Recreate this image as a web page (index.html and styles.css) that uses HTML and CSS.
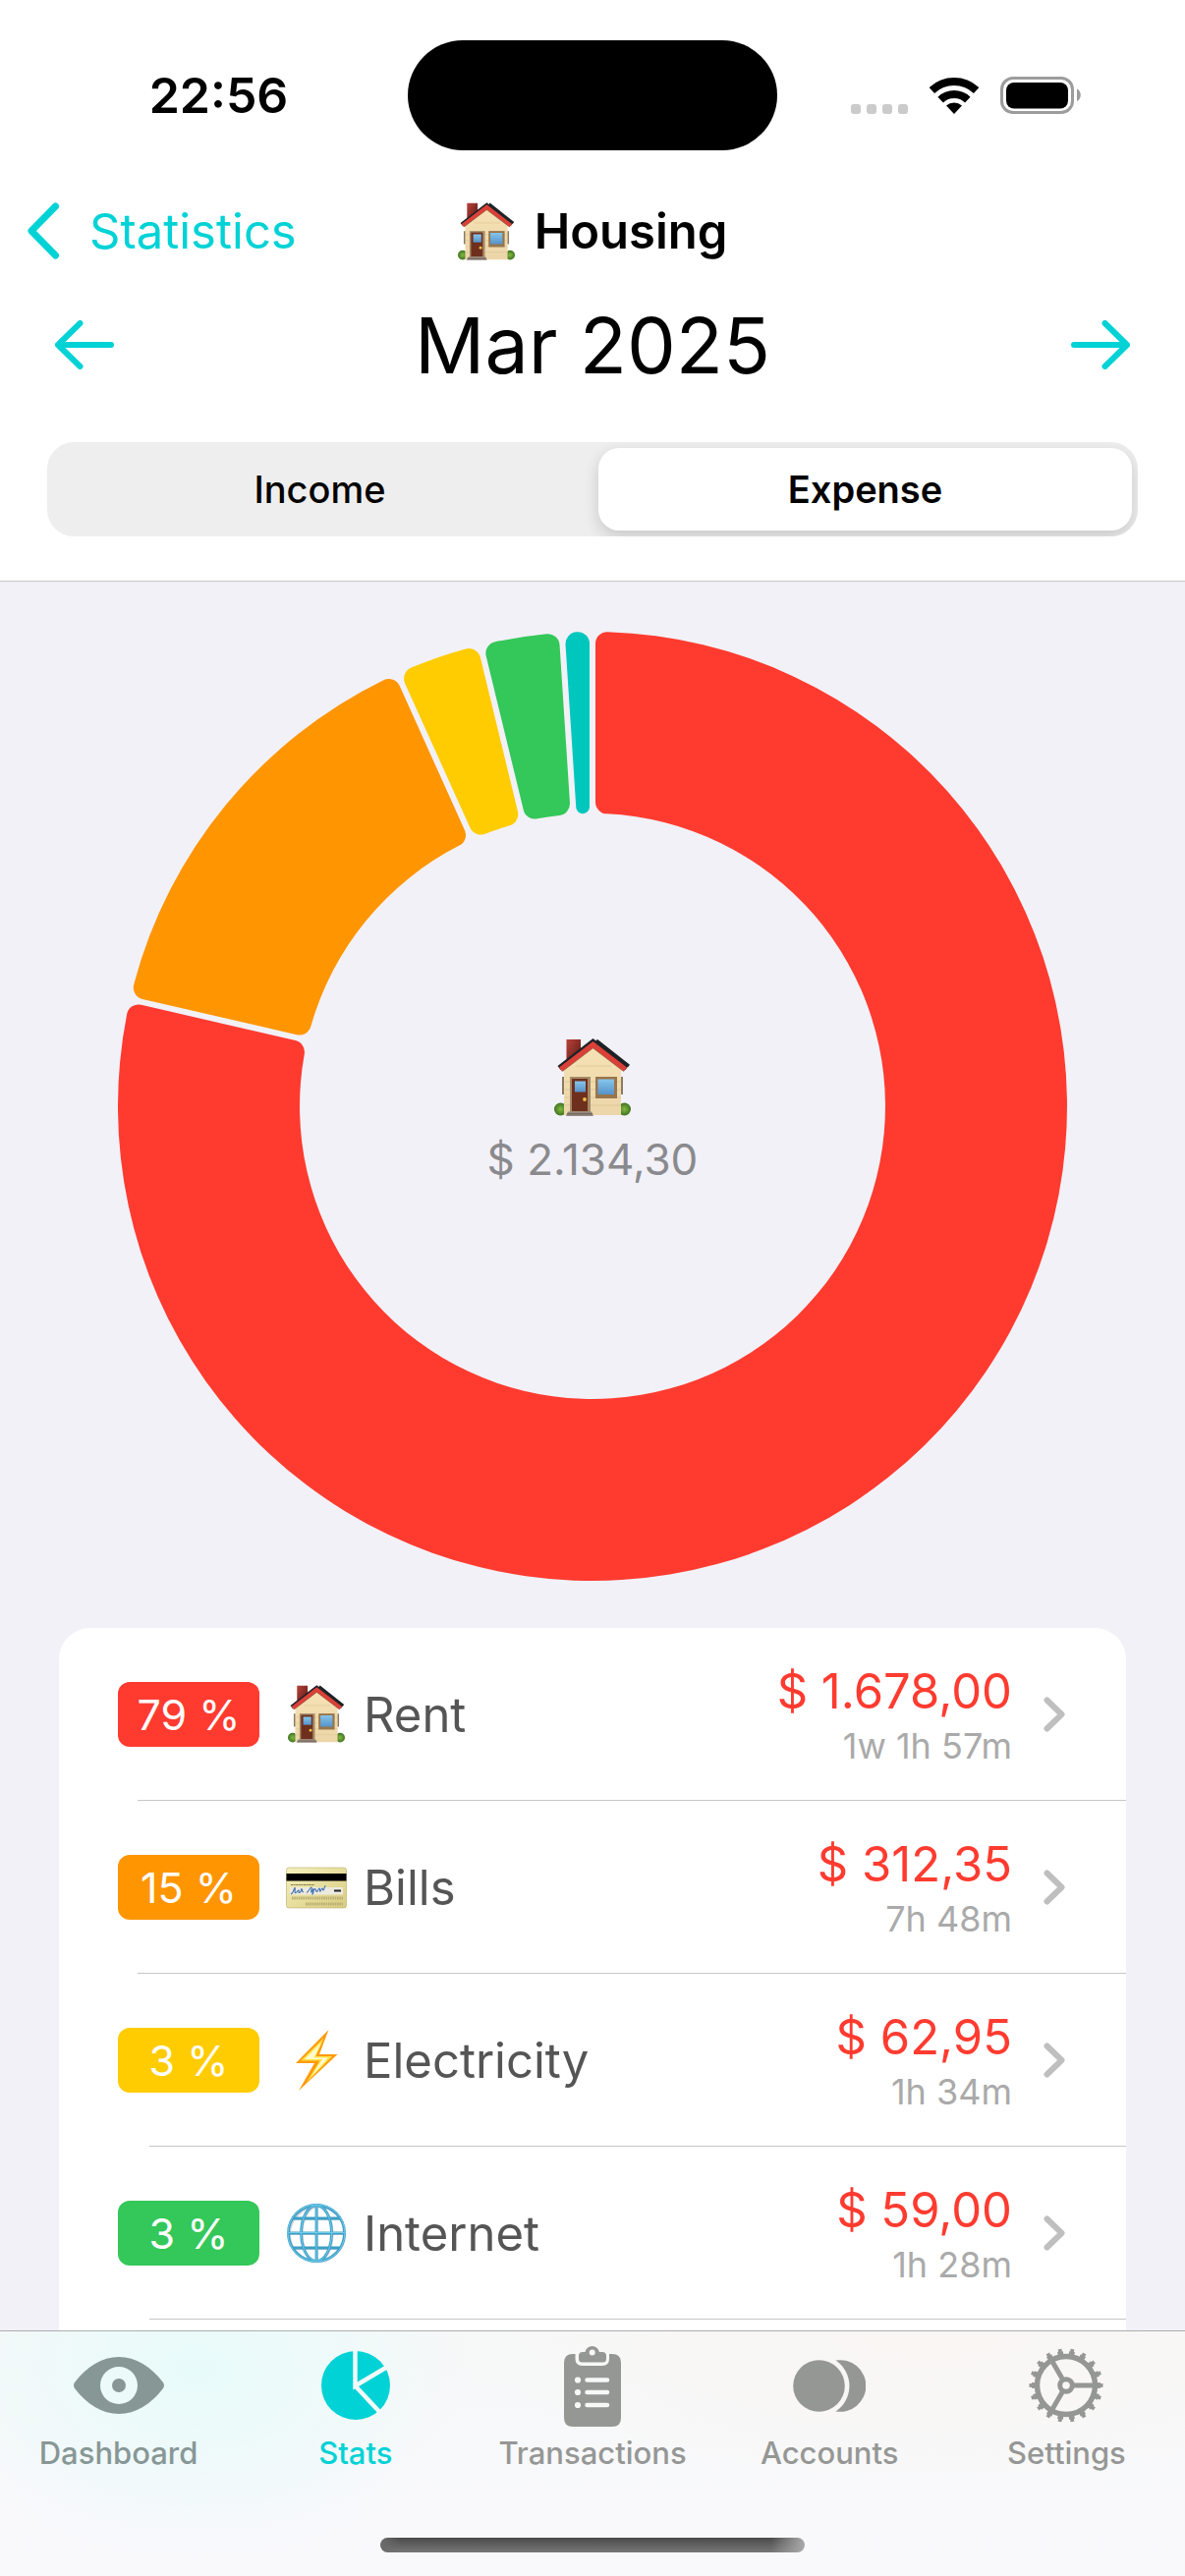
FILE: index.html
```html
<!DOCTYPE html>
<html lang="en">
<head>
<meta charset="utf-8">
<meta name="viewport" content="width=device-width, initial-scale=1">
<title>Housing</title>
<link rel="stylesheet" href="styles.css">
</head>
<body>
<svg class="sprite" width="0" height="0" aria-hidden="true">
  <defs>
    <linearGradient id="chimney" x1="0" y1="0" x2="1" y2="1"><stop offset="0" stop-color="#b8433a"/><stop offset="1" stop-color="#571611"/></linearGradient>
    <linearGradient id="wall" x1="0" y1="0" x2="0" y2="1"><stop offset="0" stop-color="#f6e2b4"/><stop offset="1" stop-color="#ecd6a9"/></linearGradient>
    <linearGradient id="glass" x1="0" y1="0" x2="0" y2="1"><stop offset="0" stop-color="#86c5ea"/><stop offset="1" stop-color="#5593cb"/></linearGradient>
    <radialGradient id="bush"><stop offset="0" stop-color="#83b93f"/><stop offset="1" stop-color="#3f7322"/></radialGradient>
    <linearGradient id="gold" x1="0" y1="0" x2="1" y2="1"><stop offset="0" stop-color="#f5f1bb"/><stop offset="1" stop-color="#d9cc80"/></linearGradient>
  </defs>
  <symbol id="house" viewBox="0 0 78 79">
    <circle cx="6.500" cy="72" r="6.500" fill="url(#bush)"/>
    <circle cx="71.500" cy="72" r="6.500" fill="url(#bush)"/>
    <path d="M8 39h3v18H8zM67 39h3v18h-3z" fill="#8d7a62"/>
    <path d="M12.500 1h14.500v16L12.500 27z" fill="url(#chimney)"/>
    <path d="M10 30L39.500 6 68 30v48H10z" fill="url(#wall)"/>
    <path d="M11 44h57M11 52h57M11 60h57M11 68h57M22 28h36" stroke="#dcc493" stroke-width=".8"/>
    <path d="M8 33L39.500 9 71 33" fill="none" stroke="#8e6a4a" stroke-width="2"/>
    <path d="M3.500 28L39.500 0 75.500 28l-3 4L39.500 5 6.500 32z" fill="#1d2225"/>
    <path d="M5 29.500L39.500 3 74 29.500l-3 4L39.500 9.500 8 33.500z" fill="#db4038"/>
    <path d="M43 1.800L76 28" stroke="#1d2225" stroke-width="3"/>
    <path d="M16 39h21v36H16z" fill="#a48a68"/>
    <path d="M18 41h16v33H18z" fill="#6f2f1d"/>
    <path d="M21 43.500h11v11H21z" fill="url(#glass)"/>
    <circle cx="31" cy="62" r="1.900" fill="#efc04b"/>
    <path d="M42 39h22v22H42z" fill="#98754c"/>
    <path d="M44.500 41.500H61V57H44.500z" fill="url(#glass)"/>
    <path d="M14 74.500h24l2 4.500H12z" fill="#95897f"/>
    <path d="M13 76.800h26" stroke="#655b53" stroke-width="1"/>
  </symbol>
  <symbol id="chevron" viewBox="0 0 22 36">
    <path d="M3.500 3.500L18.500 18l-15 14.500" fill="none" stroke="currentColor" stroke-width="6" stroke-linecap="round" stroke-linejoin="round"/>
  </symbol>
</svg>

<div class="app">
  <header class="top">
    <div class="status">
      <time class="clock">22:56</time>
      <div class="island"></div>
      <div class="status-icons">
        <svg width="58" height="10" viewBox="0 0 58 10" class="signal" aria-label="No signal">
          <g fill="#cbcbcb"><rect width="10" height="10" rx="3"/><rect x="16" width="10" height="10" rx="3"/><rect x="32" width="10" height="10" rx="3"/><rect x="48" width="10" height="10" rx="3"/></g>
        </svg>
        <svg width="50" height="38" viewBox="0 0 50 38" aria-label="Wi-Fi">
          <path d="M2.300 14A33 33 0 0 1 47.700 14M11.200 23.600a20 20 0 0 1 27.600 0" fill="none" stroke="#000" stroke-width="8"/>
          <path d="M25 38l-8-8.500a12 12 0 0 1 16 0z"/>
        </svg>
        <svg width="82" height="38" viewBox="0 0 82 38" aria-label="Battery full">
          <rect x="1.500" y="1.500" width="72" height="35" rx="11.500" fill="none" stroke="#9c9c9c" stroke-width="3"/>
          <rect x="6" y="6" width="63" height="26.500" rx="8"/>
          <path d="M78 12.500c5 2 5 10.500 0 12.500z" fill="#9c9c9c"/>
        </svg>
      </div>
    </div>

    <nav class="nav">
      <a class="back" href="#statistics">
        <svg width="34" height="58" viewBox="0 0 34 58" aria-hidden="true"><path d="M29.500 4L5 29l24.500 25" fill="none" stroke="currentColor" stroke-width="7" stroke-linecap="round" stroke-linejoin="round"/></svg>
        Statistics
      </a>
      <h1 class="title"><svg class="title-icon" aria-hidden="true"><use href="#house"/></svg>Housing</h1>
    </nav>

    <div class="month">
      <button class="step" type="button" aria-label="Previous month">
        <svg width="60" height="50" viewBox="0 0 60 50"><path d="M25.500 3L3 25l22.500 22M3 25h54" fill="none" stroke="currentColor" stroke-width="6" stroke-linecap="round" stroke-linejoin="round"/></svg>
      </button>
      <h2 class="month-name">Mar 2025</h2>
      <button class="step" type="button" aria-label="Next month">
        <svg width="60" height="50" viewBox="0 0 60 50"><path d="M34.500 3L57 25 34.500 47M57 25H3" fill="none" stroke="currentColor" stroke-width="6" stroke-linecap="round" stroke-linejoin="round"/></svg>
      </button>
    </div>

    <div class="segmented" role="radiogroup" aria-label="Type">
      <input class="segment-input" type="radio" name="type" id="income">
      <label class="segment" for="income">Income</label>
      <input class="segment-input" type="radio" name="type" id="expense" checked>
      <label class="segment" for="expense">Expense</label>
    </div>
  </header>

  <main class="content">
    <section class="donut" aria-label="Expenses by category">
      <svg class="donut-chart" id="chart" viewBox="-483 -483 966 966" role="img" aria-label="Donut chart"></svg>
      <div class="donut-label">
        <svg class="donut-icon" aria-hidden="true"><use href="#house"/></svg>
        <span>$ 2.134,30</span>
      </div>
    </section>

    <ul class="list">
      <li class="item">
        <a class="row" href="#rent">
          <span class="badge red">79 %</span>
          <svg class="row-icon" viewBox="0 0 62 62" aria-hidden="true"><use href="#house" x="2" y="1" width="58" height="59"/></svg>
          <span class="name">Rent</span>
          <span class="figures"><span class="amount">$ 1.678,00</span><span class="duration">1w 1h 57m</span></span>
          <svg class="chevron" aria-hidden="true"><use href="#chevron"/></svg>
        </a>
      </li>
      <li class="item">
        <a class="row" href="#bills">
          <span class="badge orange">15 %</span>
          <svg class="row-icon" viewBox="0 0 62 62" aria-hidden="true">
            <rect x=".5" y="11" width="61" height="41" rx="2.500" fill="url(#gold)" stroke="#b9ab6a" stroke-width=".6"/>
            <path d="M.5 17h61v7.500H.5z"/>
            <path d="M5 28.500h24" stroke="#7a7348" stroke-width="1" stroke-dasharray="2 .6"/>
            <path d="M4 31h54v7.500H4z" fill="#eceade"/>
            <path d="M5 38c3-1 3-6 4-6.500s-1 6 1 5 2-3 3-2.500-1 3 1 2.500 1-4 2-4 0 4 2 3m3 1c2-1 4-6 5-5.500s-1 5 0 5 1-4 2-3-1 6-1 5 2-7 3-5 1 3 2 2 1-3 2-3 0 4 1 3 1-3 2-3 0 2 1 2 2-6 2-4" fill="none" stroke="#4573b5" stroke-width="1.100"/>
            <path d="M49 34.500h7" stroke="#222" stroke-width="2"/>
            <path d="M6 42h52M20 48h38" stroke="#b9ad72" stroke-width="3" stroke-dasharray="1.500 .8"/>
          </svg>
          <span class="name">Bills</span>
          <span class="figures"><span class="amount">$ 312,35</span><span class="duration">7h 48m</span></span>
          <svg class="chevron" aria-hidden="true"><use href="#chevron"/></svg>
        </a>
      </li>
      <li class="item short-rule">
        <a class="row" href="#electricity">
          <span class="badge yellow">3 %</span>
          <svg class="row-icon" viewBox="0 0 62 62" aria-hidden="true">
            <path d="M43.500 0L10 34h19L13 62l39.500-37H34z" fill="#ff9b0c"/>
            <path d="M38.500 8.500L15 31.500h19.500L21 53.500 47 27H30.500z" fill="#ffe24a"/>
            <path d="M36 13L19 30h18L26 47.500 43 28.500H28.500z" fill="#fffbd0"/>
          </svg>
          <span class="name">Electricity</span>
          <span class="figures"><span class="amount">$ 62,95</span><span class="duration">1h 34m</span></span>
          <svg class="chevron" aria-hidden="true"><use href="#chevron"/></svg>
        </a>
      </li>
      <li class="item short-rule">
        <a class="row" href="#internet">
          <span class="badge green">3 %</span>
          <svg class="row-icon" viewBox="0 0 62 62" aria-hidden="true">
            <g fill="none" stroke="#c9cfdb" stroke-width="2" transform="translate(1 1)"><circle cx="31" cy="31" r="28"/><ellipse cx="31" cy="31" rx="15.500" ry="28"/><path d="M31 3v56M3 31h56M7 16h48M7 46h48"/></g>
            <g fill="none" stroke="#3d9fc6" stroke-width="2.800"><circle cx="31" cy="31" r="28.500"/><ellipse cx="31" cy="31" rx="15.500" ry="28.500"/><path d="M31 2.500v57M2.500 31h57M6.500 16h49M6.500 46h49"/></g>
            <g fill="none" stroke="#6fcdec" stroke-width="1"><circle cx="31" cy="31" r="29"/><ellipse cx="31" cy="31" rx="15.500" ry="28.500"/><path d="M31 2.500v57M2.500 30.500h57"/></g>
          </svg>
          <span class="name">Internet</span>
          <span class="figures"><span class="amount">$ 59,00</span><span class="duration">1h 28m</span></span>
          <svg class="chevron" aria-hidden="true"><use href="#chevron"/></svg>
        </a>
      </li>
    </ul>
  </main>

  <footer class="tabbar">
    <nav class="tabs">
      <a class="tab tinted" href="#dashboard">
        <svg class="tab-icon" width="92" height="58" viewBox="0 0 92 58" aria-hidden="true"><path fill="currentColor" fill-rule="evenodd" d="M1 26C13 10 29 0 46 0s33 10 45 26q2 3 0 6C79 48 63 58 46 58S13 48 1 32q-2-3 0-6zM46 10a19 19 0 1 0 0 38 19 19 0 0 0 0-38zm0 12a7 7 0 1 1 0 14 7 7 0 0 1 0-14z"/></svg>
        Dashboard
      </a>
      <a class="tab active" href="#stats" aria-current="page">
        <svg class="tab-icon" width="70" height="70" viewBox="0 0 70 70" aria-hidden="true">
          <mask id="slits"><rect width="70" height="70" fill="#fff"/><path d="M34.500-4v39.500L74 12M34.500 35.500L64 67" fill="none" stroke="#000" stroke-width="4.500"/></mask>
          <circle cx="35" cy="35" r="35" fill="currentColor" mask="url(#slits)"/>
        </svg>
        Stats
      </a>
      <a class="tab" href="#transactions">
        <svg class="tab-icon" width="58" height="83" viewBox="0 0 58 83" aria-hidden="true">
          <path fill="currentColor" d="M9 9h2.500v5q0 7 7 7h20.500q7 0 7-7V9H49q9 0 9 9v56q0 9-9 9H9q-9 0-9-9V18q0-9 9-9z"/>
          <path fill="currentColor" fill-rule="evenodd" d="M19 7h2.500a7.300 7.300 0 0 1 14.400 0H39q4 0 4 4v3q0 3.500-3.500 3.500h-21Q15 17.500 15 14v-3q0-4 4-4zm9.700-2.500a3 3 0 1 0 0 6 3 3 0 0 0 0-6z"/>
          <path d="M23.500 35.500H44M23.500 48H44M23.500 61H44" stroke="#f7f8f8" stroke-width="4.500" stroke-linecap="round"/>
          <g fill="#f7f8f8"><circle cx="14" cy="35.500" r="3.100"/><circle cx="14" cy="48" r="3.100"/><circle cx="14" cy="61" r="3.100"/></g>
        </svg>
        Transactions
      </a>
      <a class="tab" href="#accounts">
        <svg class="tab-icon" width="74" height="53" viewBox="0 0 74 53" aria-hidden="true"><g fill="currentColor"><circle cx="26.500" cy="26.500" r="26.300"/><path d="M43.500.6A26.300 26.300 0 1 1 43.500 52.400 31 31 0 0 0 43.500.6z"/></g></svg>
        Accounts
      </a>
      <a class="tab" href="#settings">
        <svg class="tab-icon" width="76" height="76" viewBox="-38 -38 76 76" aria-hidden="true">
          <g fill="none" stroke="currentColor">
            <circle r="29.500" stroke-width="5.500"/>
            <circle r="33" stroke-width="4" pathLength="360" stroke-dasharray="10 10" stroke-dashoffset="5"/>
            <circle r="35.500" stroke-width="4" pathLength="360" stroke-dasharray="6 14" stroke-dashoffset="3"/>
            <circle r="6.300" stroke-width="5"/>
            <path d="M8 0h20M-4 6.900l-10 17.300M-4-6.900l-10-17.300" stroke-width="5"/>
          </g>
        </svg>
        Settings
      </a>
    </nav>
    <div class="home-indicator"></div>
  </footer>
</div>
<script src="chart.js"></script>
</body>
</html>
```
FILE: styles.css
```css
:root {
  --accent: #00d2d6;
  --red: #ff3b30;
  --page: #f2f1f7;
  --rule: #c6c6c8;
}

* { box-sizing: border-box; }

body {
  margin: 0;
  background: var(--page);
  color: #000;
  font-family: Inter, "Liberation Sans", sans-serif;
}

a { color: inherit; text-decoration: none; }
svg { display: block; flex: none; }
.sprite { position: absolute; }

.app {
  display: flex;
  flex-direction: column;
  height: 100vh;
}

/* Header */
.top {
  background: #fff;
  border-bottom: 1px solid var(--rule);
  padding-bottom: 45px;
}

.status {
  display: grid;
  grid-template-columns: 1fr 376px 1fr;
  align-items: center;
  padding-top: 41px;
}

.island {
  height: 112px;
  border-radius: 56px;
  background: #000;
}

.clock {
  padding-left: 30px;
  text-align: center;
  font-size: 50px;
  font-weight: 600;
}

.status-icons {
  display: flex;
  justify-content: center;
  gap: 22px;
  padding-right: 32px;
}

.signal { align-self: flex-end; }

.nav {
  display: grid;
  grid-template-columns: 1fr auto 1fr;
  align-items: center;
  height: 110px;
  margin-top: 27px;
  padding: 0 27px;
  font-size: 49px;
}

.back {
  display: flex;
  align-items: center;
  gap: 30px;
  color: var(--accent);
}

.title {
  display: flex;
  align-items: center;
  gap: 20px;
  margin: 0;
  font-size: 49px;
  font-weight: 600;
}

.title-icon { width: 58px; height: 59px; }

.month {
  display: flex;
  align-items: center;
  justify-content: space-between;
  height: 122px;
  padding: 0 56px;
}

.month-name {
  margin: 0;
  font-size: 79px;
  font-weight: 400;
}

.step {
  padding: 0;
  border: 0;
  background: none;
  color: var(--accent);
}

.segmented {
  display: grid;
  grid-template-columns: 1fr 1fr;
  gap: 12px;
  height: 96px;
  margin: 38px 48px 0;
  padding: 6px;
  border-radius: 27px;
  background: #eee;
  overflow: hidden;
}

.segment-input {
  position: absolute;
  opacity: 0;
}

.segment {
  display: grid;
  place-items: center;
  border-radius: 21px;
  font-size: 38px;
  font-weight: 500;
}

.segment-input:checked + .segment {
  background: #fff;
  box-shadow: 0 6px 16px rgba(0, 0, 0, .16);
  font-weight: 600;
}

/* Chart */
.content {
  display: flex;
  flex: 1;
  flex-direction: column;
  min-height: 0;
  padding: 51px 60px 0;
  overflow: hidden;
}

.donut {
  display: grid;
  flex: none;
  place-items: center;
  padding: 0 60px;
}

.donut-chart,
.donut-label { grid-area: 1 / 1; }

.donut-chart { width: 100%; }

.donut-label {
  display: grid;
  justify-items: center;
  gap: 16px;
  padding-top: 12px;
  color: #8a8a8e;
  font-size: 44px;
  line-height: 56px;
}

.donut-icon { width: 78px; height: 79px; }

/* List */
.list {
  flex: 1;
  margin: 48px 0 0;
  padding: 0;
  border-radius: 32px 32px 0 0;
  background: #fff;
  list-style: none;
}

.item::after {
  content: "";
  display: block;
  height: 1px;
  margin-left: 80px;
  background: var(--rule);
}

.short-rule::after { margin-left: 92px; }

.row {
  display: flex;
  align-items: center;
  height: 175px;
  padding: 0 62px 0 60px;
}

.badge {
  display: grid;
  place-items: center;
  width: 144px;
  height: 66px;
  margin-right: 27px;
  border-radius: 12px;
  color: #fff;
  font-size: 43px;
}

.red { background: var(--red); }
.orange { background: #ff9500; }
.yellow { background: #ffcc02; }
.green { background: #34c759; }

.row-icon { width: 62px; height: 62px; }

.name {
  flex: 1;
  margin-left: 17px;
  padding-top: 2px;
  color: #555;
  font-size: 49px;
}

.figures {
  display: grid;
  justify-items: end;
  padding-top: 4px;
}

.amount {
  color: var(--red);
  font-size: 49px;
  line-height: 60px;
}

.duration {
  color: #aaa;
  font-size: 36px;
  line-height: 50px;
}

.chevron {
  width: 22px;
  height: 36px;
  margin-left: 32px;
  color: #bfbfbf;
}

/* Tab bar */
.tabbar {
  border-top: 1px solid #adadb1;
  background:
    radial-gradient(ellipse 280px 190px at 200px 40px, #e7fbfa, transparent),
    radial-gradient(ellipse 460px 170px at 950px 0, #f9f6f3, transparent),
    linear-gradient(#f7f8f8, #f9f9fc);
}

.tabs {
  display: grid;
  grid-template-columns: repeat(5, 1fr);
}

.tab {
  display: grid;
  grid-template-rows: 102px 36px;
  justify-items: center;
  padding-top: 4px;
  color: #959795;
  font-size: 31px;
  font-weight: 500;
  line-height: 36px;
}

.tab-icon { align-self: center; }
.tinted { color: #879796; }
.active { color: var(--accent); }

.home-indicator {
  width: 432px;
  height: 15px;
  margin: 68px auto 24px;
  border-radius: 8px;
  background: linear-gradient(90deg, #6c6c6c, transparent 5%, transparent 92%, #aaa), linear-gradient(#4a4a4a, #777);
}
```
FILE: chart.js
```javascript
const OUTER = 483;
const INNER = 298;
const HALF_GAP = 3;
const CORNER = 12;

const slices = [
  { value: 1678, color: "#ff3b30" },
  { value: 312.35, color: "#ff9500" },
  { value: 62.95, color: "#ffcc02" },
  { value: 59, color: "#34c759" },
  { value: 22, color: "#00c7be" }
];

// Outline of a ring slice with rounded corners and parallel gaps.
function slicePath(start, end) {
  const half = Math.min((end - start) / 2, Math.PI / 2);
  const s = Math.sin(half);
  const r1 = Math.min(CORNER, (OUTER * s - HALF_GAP) / (1 + s));
  const r2 = Math.min(CORNER, (INNER * s - HALF_GAP) / (1 - s + 1e-9));

  // Position along (a) and beside (b) the edge at the given angle.
  const at = (angle, a, b) =>
    (a * Math.sin(angle) + b * Math.cos(angle)).toFixed(2) + " " +
    (b * Math.sin(angle) - a * Math.cos(angle)).toFixed(2);

  const b1 = HALF_GAP + r1;
  const a1 = Math.sqrt((OUTER - r1) ** 2 - b1 ** 2);
  const k1 = OUTER / (OUTER - r1);
  const b2 = HALF_GAP + r2;
  const a2 = Math.sqrt((INNER + r2) ** 2 - b2 ** 2);
  const k2 = INNER / (INNER + r2);
  const large = end - start > Math.PI ? 1 : 0;

  return `M${at(start, a2, HALF_GAP)}L${at(start, a1, HALF_GAP)}` +
    `A${r1} ${r1} 0 0 1 ${at(start, a1 * k1, b1 * k1)}` +
    `A${OUTER} ${OUTER} 0 ${large} 1 ${at(end, a1 * k1, -b1 * k1)}` +
    `A${r1} ${r1} 0 0 1 ${at(end, a1, -HALF_GAP)}` +
    `L${at(end, a2, -HALF_GAP)}` +
    `A${r2} ${r2} 0 0 1 ${at(end, a2 * k2, -b2 * k2)}` +
    `A${INNER} ${INNER} 0 ${large} 0 ${at(start, a2 * k2, b2 * k2)}` +
    `A${r2} ${r2} 0 0 1 ${at(start, a2, HALF_GAP)}Z`;
}

const chart = document.getElementById("chart");
const total = slices.reduce((sum, slice) => sum + slice.value, 0);
let angle = 0;
for (const slice of slices) {
  const next = angle + slice.value / total * 2 * Math.PI;
  const path = document.createElementNS("http://www.w3.org/2000/svg", "path");
  path.setAttribute("d", slicePath(angle, next));
  path.setAttribute("fill", slice.color);
  chart.append(path);
  angle = next;
}
```
